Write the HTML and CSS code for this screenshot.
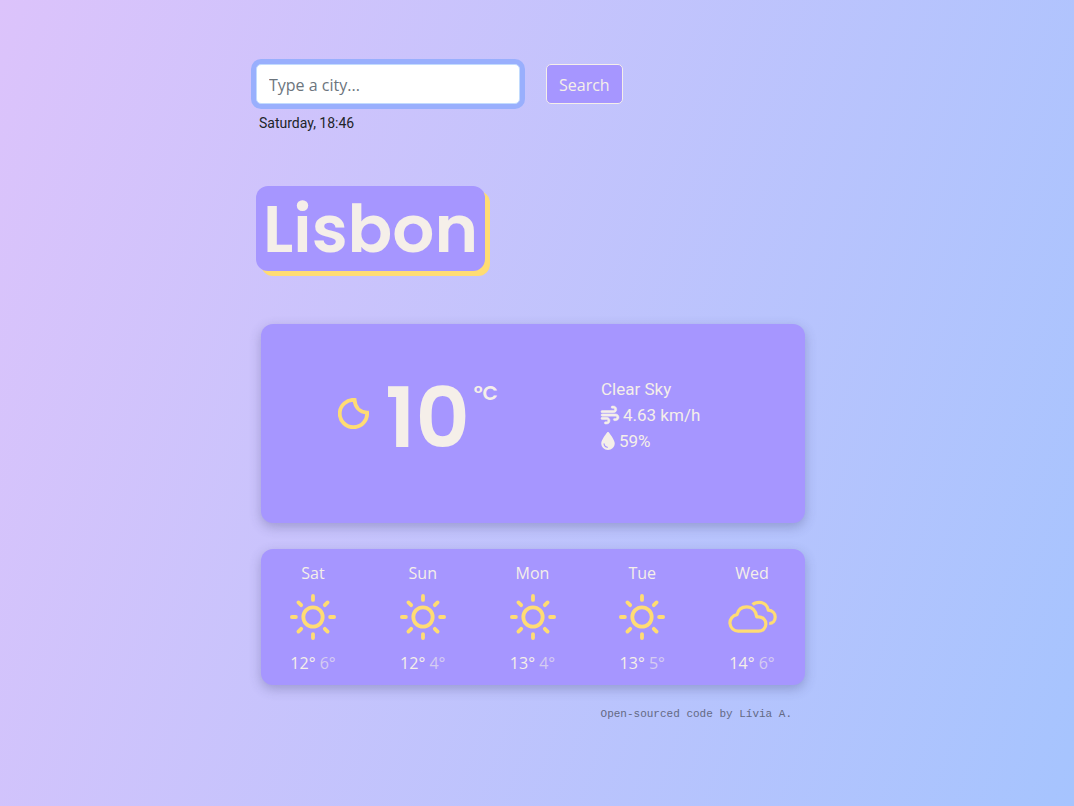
FILE: index.html
```html
<!DOCTYPE html>
<html lang="en">
<head>
<meta charset="utf-8">
<meta name="viewport" content="width=device-width, initial-scale=1">
<title>Weather</title>
<link rel="stylesheet" href="styles.css">
</head>
<body>
<svg class="sprite" aria-hidden="true">
  <symbol id="sun" viewBox="0 0 46 46">
    <g fill="none" stroke="currentColor" stroke-width="3.8" stroke-linecap="round">
      <circle cx="23" cy="23" r="9.7"/>
      <path d="M23 1.9v4M23 40.1v4M1.9 23h4M40.1 23h4M8.4 8.400l2.800 2.800M34.800 34.800l2.800 2.800M8.400 37.600l2.800-2.800M34.800 11.200l2.800-2.800"/>
    </g>
  </symbol>
  <symbol id="clouds" viewBox="0 0 49 33">
    <g fill="none" stroke="currentColor" stroke-width="3.2" stroke-linecap="butt" stroke-linejoin="round">
      <path d="M10.5 30.700H30.700A7.200 7.200 0 0 0 30.700 16.300H28.700C28 10 24 6.300 18.700 6.300C13.500 6.300 10 9.500 9 14.200A8.300 8.300 0 0 0 10.500 30.700Z"/>
      <path d="M24.600 4.200C26.200 2.600 28.500 1.900 31 1.900C36 1.900 39.500 5 40.300 9.700C44.500 10 47.200 13 47.200 16.500C47.200 20.400 44.800 23 41.200 23"/>
    </g>
  </symbol>
</svg>
<main class="app">
  <form class="search">
    <input class="search-input" type="text" placeholder="Type a city..." aria-label="City" autocomplete="off">
    <button class="search-button" type="button">Search</button>
  </form>
  <p class="date">Saturday, 18:46</p>
  <h1 class="city">Lisbon</h1>
  <section class="card current">
    <div class="temperature">
      <svg class="moon" viewBox="0 0 31 31" aria-hidden="true"><path d="M16.600 1.900A13.700 13.700 0 1 0 29.100 14.600C21.500 14.200 17 9 16.600 1.900Z" fill="none" stroke="currentColor" stroke-width="3.800"/></svg>
      <strong class="degrees">10</strong>
      <span class="unit">°C</span>
    </div>
    <ul class="details">
      <li>Clear Sky</li>
      <li><svg class="wind" viewBox="0 0 512 512" aria-hidden="true"><path fill="currentColor" stroke="currentColor" stroke-width="14" d="M288 32c0 17.7 14.3 32 32 32h32c17.7 0 32 14.3 32 32s-14.3 32-32 32H32c-17.7 0-32 14.3-32 32s14.3 32 32 32H352c53 0 96-43 96-96s-43-96-96-96H320c-17.7 0-32 14.3-32 32zm64 352c0 17.7 14.3 32 32 32h32c53 0 96-43 96-96s-43-96-96-96H32c-17.7 0-32 14.3-32 32s14.3 32 32 32H416c17.7 0 32 14.3 32 32s-14.3 32-32 32H384c-17.7 0-32 14.3-32 32zM128 512h32c53 0 96-43 96-96s-43-96-96-96H32c-17.7 0-32 14.3-32 32s14.3 32 32 32H160c17.7 0 32 14.3 32 32s-14.3 32-32 32H128c-17.7 0-32 14.3-32 32s14.3 32 32 32z"/></svg>4.63 km/h</li>
      <li><svg class="drop" viewBox="0 0 384 512" aria-hidden="true"><path fill="currentColor" d="M192 512C86 512 0 426 0 320C0 228.800 130.200 57.700 166.600 11.700C172.600 4.200 181.500 0 191.100 0h1.800c9.600 0 18.500 4.200 24.500 11.700C253.800 57.700 384 228.800 384 320c0 106-86 192-192 192zM96 336c0-8.800-7.200-16-16-16s-16 7.200-16 16c0 61.900 50.100 112 112 112c8.800 0 16-7.200 16-16s-7.200-16-16-16c-44.200 0-80-35.800-80-80z"/></svg>59%</li>
    </ul>
  </section>
  <section class="card forecast">
    <div class="day"><span>Sat</span><svg class="day-icon"><use href="#sun"/></svg><span>12° <span class="low">6°</span></span></div>
    <div class="day"><span>Sun</span><svg class="day-icon"><use href="#sun"/></svg><span>12° <span class="low">4°</span></span></div>
    <div class="day"><span>Mon</span><svg class="day-icon"><use href="#sun"/></svg><span>13° <span class="low">4°</span></span></div>
    <div class="day"><span>Tue</span><svg class="day-icon"><use href="#sun"/></svg><span>13° <span class="low">5°</span></span></div>
    <div class="day"><span>Wed</span><svg class="day-icon cloudy"><use href="#clouds"/></svg><span>14° <span class="low">6°</span></span></div>
  </section>
  <footer class="credit">Open-sourced code by Lívia A.</footer>
</main>
</body>
</html>
```
FILE: styles.css
```css
* { box-sizing: border-box; }

body {
  margin: 0;
  min-height: 100vh;
  background: linear-gradient(109deg, #dcc3fb 0%, #a6c4fe 100%);
  color: #212529;
  font-family: Roboto, sans-serif;
  font-size: 14px;
}

.sprite { display: none; }

.app {
  max-width: 562px;
  margin: 0 auto;
  padding-top: 64px;
}

.search {
  display: flex;
  gap: 26px;
}

.search-input,
.search-button {
  height: 40px;
  padding: 2px 12px 0;
  border-radius: 5px;
  font-family: "Open Sans", sans-serif;
  font-size: 16px;
}

.search-input {
  width: 264px;
  border: 1px solid #c2dbfe;
  background: #fff;
  color: #212529;
  outline: none;
  box-shadow: 0 0 0 5px #99affd;
}

.search-input::placeholder { color: #6c757d; opacity: 1; }

.search-button {
  border: 1px solid #f5efe9;
  background: #a696ff;
  color: #f5efe9;
}

.date {
  margin: 7px 0 0 3px;
  line-height: 24px;
}

.city {
  width: fit-content;
  margin: 51px 0 0;
  padding: 2px 7px 0;
  border-radius: 12px;
  background: #a696ff;
  box-shadow: 5px 5px 0 #ffdc73;
  color: #f5efe9;
  font-family: Poppins, Inter, sans-serif;
  font-size: 66px;
  font-weight: 600;
  line-height: 83px;
}

.card {
  margin: 26px 13px 0 5px;
  border-radius: 12px;
  background: #a696ff;
  box-shadow: 0 4px 12px rgba(60, 60, 110, 0.3);
  color: #f5efe9;
}

.current {
  display: grid;
  grid-template-columns: 5fr 3fr;
  margin-top: 53px;
  padding: 52px 0 69px;
}

.temperature {
  display: flex;
  align-items: center;
  padding-left: 77px;
}

.moon {
  width: 31px;
  height: 31px;
  margin-right: 16px;
  margin-bottom: 4px;
  color: #ffdc73;
}

.degrees,
.unit {
  font-family: Poppins, Inter, sans-serif;
  font-weight: 600;
}

.degrees {
  padding-top: 6px;
  font-size: 84px;
  line-height: 72px;
}

.unit {
  align-self: flex-start;
  margin-left: 4px;
  font-size: 20px;
  line-height: 34px;
}

.details {
  margin: 0;
  padding: 0;
  list-style: none;
  font-size: 17px;
  line-height: 26px;
}

.details li {
  display: flex;
  align-items: center;
  gap: 4px;
}

.wind { width: 18px; height: 18px; overflow: visible; }
.drop { width: 14px; height: 18px; }

.forecast {
  display: flex;
  justify-content: space-between;
  padding: 12px 28px 10px 27px;
}

.day {
  display: flex;
  flex-direction: column;
  align-items: center;
  width: 50px;
  font-family: "Open Sans", sans-serif;
  font-size: 16px;
  line-height: 24px;
  white-space: nowrap;
}

.day-icon {
  width: 46px;
  height: 46px;
  margin: 9px 0 11px;
  color: #ffdc73;
}

.day-icon.cloudy { width: 49px; }

.low { opacity: 0.6; }

.credit {
  margin: 21px 26px 0 0;
  color: #636984;
  font-family: "Courier New", "Liberation Mono", monospace;
  font-size: 11px;
  line-height: 16px;
  text-align: right;
}
```
